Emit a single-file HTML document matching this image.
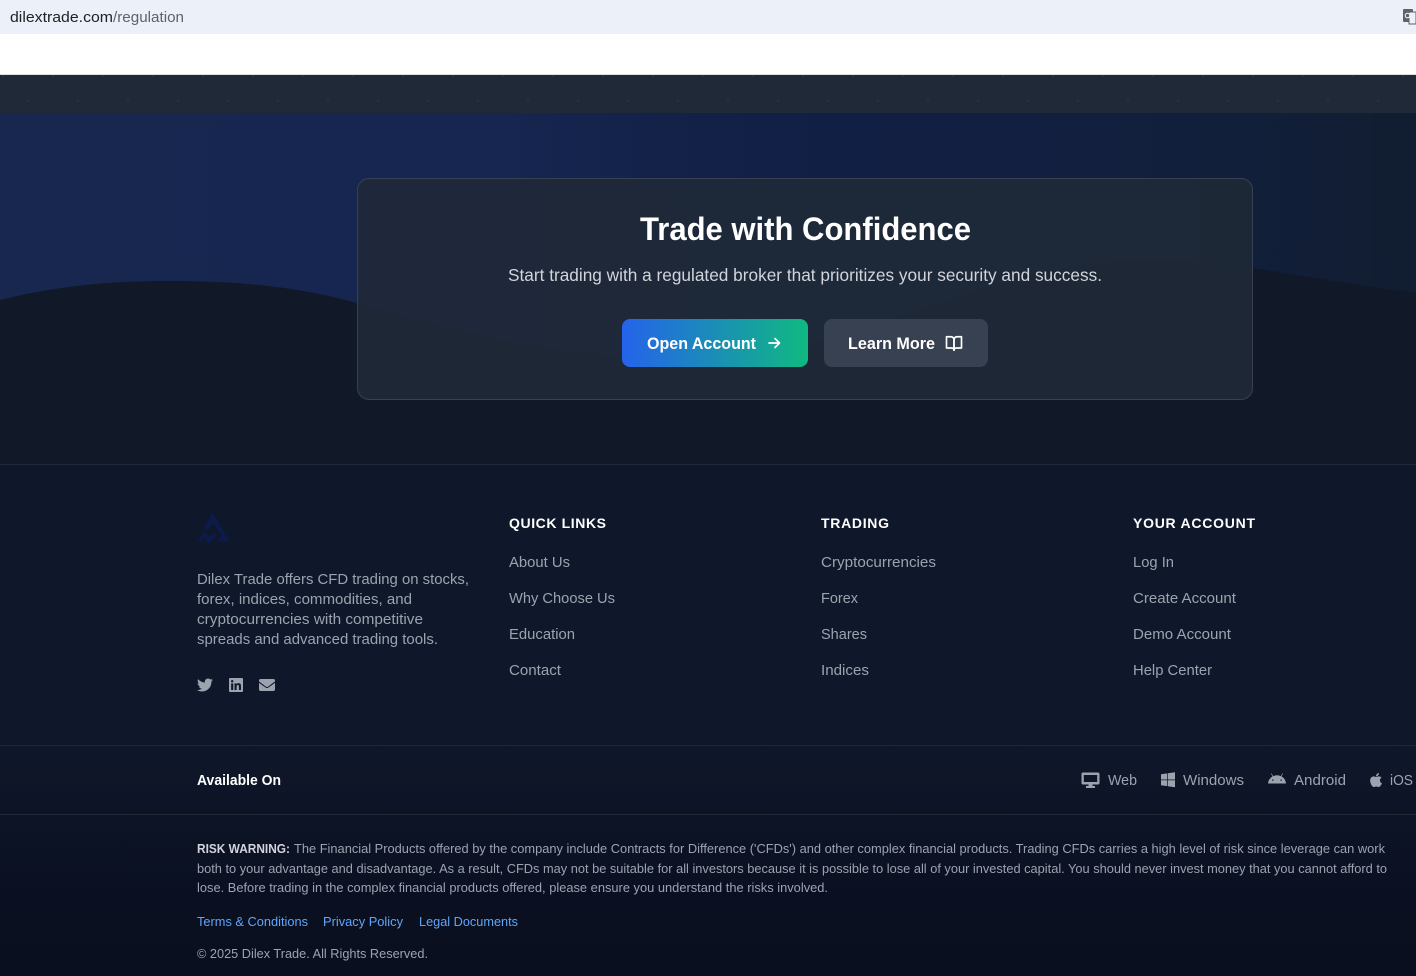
<!DOCTYPE html>
<html lang="en"><head><meta charset="utf-8"><title>Dilex Trade</title>
<style>
html,body{margin:0;padding:0;width:1416px;height:976px;overflow:hidden;background:#0f172a}
.a{position:absolute}
svg{position:absolute;left:0;top:0}
text{font-family:"Liberation Sans",sans-serif;white-space:pre}
.l{font-size:14.5px;fill:#9ca3af}
.h{font-size:14px;font-weight:bold;fill:#fff}
.p{font-size:14.5px;fill:#9ca3af}
.r{font-size:12.5px;fill:#9ca3af}
.b{font-size:12.5px;fill:#60a5fa}
</style></head><body>
<div class="a" style="left:0;top:0;width:1416px;height:34px;background:#ebf0f9"></div>
<div class="a" style="left:0;top:34px;width:1416px;height:40px;background:#fff"></div>
<div class="a" style="left:0;top:74px;width:1416px;height:1px;background:#dedede"></div>
<div class="a" style="left:0;top:75px;width:1416px;height:38px;background:#1f2937"></div>
<div class="a" style="left:0;top:113px;width:1416px;height:351px;background:linear-gradient(90deg,#172750 0%,#162650 35%,#121f46 55%,#121f3f 75%,#111f3a 88%,#111d30 100%)"></div>
<div class="a" style="left:0;top:465px;width:1416px;height:511px;background:linear-gradient(180deg,#0f172a 0%,#0f172a 55%,#0a1021 85%,#0a0f1f 100%)"></div>
<div class="a" style="left:0;top:464px;width:1416px;height:1px;background:#1f2937"></div>
<div class="a" style="left:0;top:745px;width:1416px;height:1px;background:#1f2937"></div>
<div class="a" style="left:0;top:814px;width:1416px;height:1px;background:#1f2937"></div>
<svg width="1416" height="976" viewBox="0 0 1416 976">
<defs><pattern id="d" x="0" y="0" width="50" height="50" patternUnits="userSpaceOnUse" patternTransform="translate(0 75)">
<rect x="2.6" y="0.2" width="1.2" height="1.2" fill="#374151"/><rect x="27.4" y="25.2" width="1.2" height="1.2" fill="#374151"/></pattern></defs>
<rect x="0" y="75" width="1416" height="38" fill="url(#d)"/>
<path d="M0 300C60 285 115 281 170 281C235 281 295 286 357 303C470 335 590 362 700 360C850 357 990 262 1130 261C1180 260 1215 262 1253 268C1320 279 1370 287 1416 293V464H0Z" fill="#111827"/>
</svg>
<div class="a" style="left:357px;top:178px;width:894px;height:220px;border:1px solid #374151;border-radius:12px;background:rgba(31,41,55,.9)"></div>
<div class="a" style="left:622px;top:319px;width:186px;height:48px;border-radius:8px;background:linear-gradient(90deg,#2563eb,#10b981)"></div>
<div class="a" style="left:824px;top:319px;width:164px;height:48px;border-radius:8px;background:#374151"></div>
<svg width="1416" height="976" viewBox="0 0 1416 976">
<text x="10" y="22" font-size="15" fill="#202124" textLength="103" lengthAdjust="spacingAndGlyphs">dilextrade.com</text>
<text x="113" y="22" font-size="15" fill="#5f6368" textLength="71" lengthAdjust="spacingAndGlyphs">/regulation</text>
<g><rect x="1403" y="9" width="10" height="13" rx="1" fill="#5f6368"/><rect x="1409" y="12" width="7" height="12" fill="#ebf0f9" stroke="#5f6368" stroke-width="1"/><circle cx="1407.5" cy="15.5" r="2.3" fill="none" stroke="#fff" stroke-width="1"/></g>

<text x="640" y="240" font-size="32" font-weight="bold" fill="#fff" textLength="331" lengthAdjust="spacingAndGlyphs">Trade with Confidence</text>
<text x="508" y="281" font-size="17.5" fill="#d1d5db" textLength="594" lengthAdjust="spacingAndGlyphs">Start trading with a regulated broker that prioritizes your security and success.</text>
<text x="647" y="349" font-size="16.5" font-weight="bold" fill="#fff" textLength="109" lengthAdjust="spacingAndGlyphs">Open Account</text>
<path d="M769 343H779M775 338.500l4.500 4.500-4.500 4.500" fill="none" stroke="#fff" stroke-width="1.7" stroke-linecap="round" stroke-linejoin="round"/>
<text x="848" y="349" font-size="16.5" font-weight="bold" fill="#fff" textLength="87" lengthAdjust="spacingAndGlyphs">Learn More</text>
<g transform="translate(945 334.500) scale(.75)" fill="none" stroke="#fff" stroke-width="2.2" stroke-linecap="round" stroke-linejoin="round"><path d="M2 3h6a4 4 0 0 1 4 4v14a3 3 0 0 0-3-3H2z"/><path d="M22 3h-6a4 4 0 0 0-4 4v14a3 3 0 0 1 3-3h7z"/></g>

<g fill="#0d1a4c"><path d="M213 513L229 541H217.500L222 535L213 523L207 530L204 527Z"/><path d="M197.500 541L205 532L210 537L214 532L217 535L209 544L204.500 538L201 541Z"/></g>

<text x="197" y="584" class="p" textLength="272" lengthAdjust="spacingAndGlyphs">Dilex Trade offers CFD trading on stocks,</text>
<text x="197" y="604" class="p" textLength="215" lengthAdjust="spacingAndGlyphs">forex, indices, commodities, and</text>
<text x="197" y="624" class="p" textLength="226" lengthAdjust="spacingAndGlyphs">cryptocurrencies with competitive</text>
<text x="197" y="644" class="p" textLength="241" lengthAdjust="spacingAndGlyphs">spreads and advanced trading tools.</text>

<g fill="#9ca3af">
<path transform="translate(197 677) scale(.03125)" d="M459.37 151.716c.325 4.548.325 9.097.325 13.645 0 138.72-105.583 298.558-298.558 298.558-59.452 0-114.68-17.219-161.137-47.106 8.447.974 16.568 1.299 25.34 1.299 49.055 0 94.213-16.568 130.274-44.832-46.132-.975-84.792-31.188-98.112-72.772 6.498.974 12.995 1.624 19.818 1.624 9.421 0 18.843-1.3 27.614-3.573-48.081-9.747-84.143-51.98-84.143-102.985v-1.299c13.969 7.797 30.214 12.67 47.431 13.319-28.264-18.843-46.781-51.005-46.781-87.391 0-19.492 5.197-37.36 14.294-52.954 51.655 63.675 129.3 105.258 216.365 109.807-1.624-7.797-2.599-15.918-2.599-24.04 0-57.828 46.782-104.934 104.934-104.934 30.213 0 57.502 12.67 76.67 33.137 23.715-4.548 46.456-13.32 66.599-25.34-7.798 24.366-24.366 44.833-46.132 57.827 21.117-2.273 41.584-8.122 60.426-16.243-14.292 20.791-32.161 39.308-52.628 54.253z"/>
<path transform="translate(229 677) scale(.03125)" d="M416 32H31.900C14.300 32 0 46.500 0 64.300v383.400C0 465.500 14.300 480 31.900 480H416c17.600 0 32-14.500 32-32.300V64.300c0-17.800-14.400-32.300-32-32.300zM135.400 416H69V202.200h66.500V416zm-33.200-243c-21.300 0-38.500-17.300-38.500-38.500S80.900 96 102.200 96c21.200 0 38.500 17.300 38.500 38.500 0 21.300-17.200 38.500-38.500 38.500zm282.100 243h-66.400V312c0-24.800-.5-56.700-34.500-56.700-34.600 0-39.900 27-39.900 54.900V416h-66.400V202.200h63.700v29.200h.9c8.900-16.800 30.600-34.500 62.900-34.500 67.200 0 79.700 44.300 79.700 101.900V416z"/>
<path transform="translate(259 677) scale(.03125)" d="M502.300 190.800c3.900-3.100 9.700-.2 9.700 4.700V400c0 26.500-21.500 48-48 48H48c-26.500 0-48-21.500-48-48V195.600c0-5 5.700-7.800 9.700-4.700 22.400 17.400 52.100 39.500 154.100 113.600 21.100 15.400 56.700 47.800 92.200 47.600 35.700.3 72-32.800 92.300-47.600 102-74.100 131.600-96.300 154-113.700zM256 320c23.200.4 56.600-29.200 73.400-41.400 132.700-96.300 142.800-104.700 173.400-128.700 5.800-4.500 9.200-11.500 9.200-18.900v-19c0-26.500-21.500-48-48-48H48C21.500 64 0 85.500 0 112v19c0 7.400 3.400 14.300 9.200 18.900 30.600 23.900 40.700 32.400 173.400 128.700 16.800 12.200 50.200 41.800 73.400 41.400z"/>
</g>

<text x="509" y="528" class="h" textLength="97">QUICK LINKS</text>
<text x="821" y="528" class="h" textLength="68">TRADING</text>
<text x="1133" y="528" class="h" textLength="122">YOUR ACCOUNT</text>

<text x="509" y="567" class="l" textLength="61" lengthAdjust="spacingAndGlyphs">About Us</text>
<text x="509" y="603" class="l" textLength="106" lengthAdjust="spacingAndGlyphs">Why Choose Us</text>
<text x="509" y="639" class="l" textLength="66" lengthAdjust="spacingAndGlyphs">Education</text>
<text x="509" y="675" class="l" textLength="52" lengthAdjust="spacingAndGlyphs">Contact</text>
<text x="821" y="567" class="l" textLength="115" lengthAdjust="spacingAndGlyphs">Cryptocurrencies</text>
<text x="821" y="603" class="l" textLength="37" lengthAdjust="spacingAndGlyphs">Forex</text>
<text x="821" y="639" class="l" textLength="46" lengthAdjust="spacingAndGlyphs">Shares</text>
<text x="821" y="675" class="l" textLength="48" lengthAdjust="spacingAndGlyphs">Indices</text>
<text x="1133" y="567" class="l" textLength="41" lengthAdjust="spacingAndGlyphs">Log In</text>
<text x="1133" y="603" class="l" textLength="103" lengthAdjust="spacingAndGlyphs">Create Account</text>
<text x="1133" y="639" class="l" textLength="98" lengthAdjust="spacingAndGlyphs">Demo Account</text>
<text x="1133" y="675" class="l" textLength="79" lengthAdjust="spacingAndGlyphs">Help Center</text>

<text x="197" y="785" font-size="14.5" font-weight="bold" fill="#fff" textLength="84" lengthAdjust="spacingAndGlyphs">Available On</text>
<g fill="#9ca3af">
<path d="M1083 772.500H1098A1.500 1.500 0 0 1 1099.500 774V783A1.500 1.500 0 0 1 1098 784.500H1083A1.500 1.500 0 0 1 1081.500 783V774A1.500 1.500 0 0 1 1083 772.500ZM1083.800 775V782H1097.200V775ZM1088.500 784.500H1092.500V786H1095V788H1086V786H1088.500Z" fill-rule="evenodd"/>
<path d="M1161 774.300L1167.300 773.400V779.500H1161ZM1168 773.300L1175 772.300V779.500H1168ZM1161 780.200H1167.300V786.100L1161 785.200ZM1168 780.200H1175V787.200L1168 786.200Z"/>
<path transform="translate(1268 771.500) scale(.03125)" d="M420.550 301.930a24 24 0 1 1 24-24 24 24 0 0 1-24 24m-265.100 0a24 24 0 1 1 24-24 24 24 0 0 1-24 24m273.700-144.480l47.940-83a10 10 0 1 0-17.270-10l-48.540 84.070a301.250 301.250 0 0 0-246.560 0L116.180 64.450a10 10 0 1 0-17.270 10l47.940 83C64.530 202.220 8.240 285.550 0 384H576c-8.240-98.450-64.540-181.780-146.850-226.550"/>
<path transform="translate(1370 772) scale(.03125)" d="M318.700 268.700c-.2-36.700 16.400-64.400 50-84.800-18.800-26.900-47.200-41.700-84.700-44.600-35.500-2.800-74.300 20.700-88.500 20.700-15 0-49.400-19.700-76.400-19.700C63.300 141.200 4 184.800 4 273.500q0 39.300 14.400 81.200c12.800 36.700 59 126.700 107.200 125.200 25.200-.6 43-17.900 75.800-17.900 31.800 0 48.300 17.900 76.400 17.900 48.600-.7 90.400-82.500 102.600-119.300-65.200-30.700-61.700-90-61.700-91.900zm-56.600-164.200c27.300-32.400 24.800-61.900 24-72.500-24.100 1.400-52 16.400-67.900 34.900-17.500 19.800-27.800 44.300-25.600 71.900 26.100 2 49.900-11.400 69.500-34.300z"/>
</g>
<text x="1108" y="785" class="l" textLength="29" lengthAdjust="spacingAndGlyphs">Web</text>
<text x="1183" y="785" class="l" textLength="61" lengthAdjust="spacingAndGlyphs">Windows</text>
<text x="1294" y="785" class="l" textLength="52" lengthAdjust="spacingAndGlyphs">Android</text>
<text x="1390" y="785" class="l" textLength="23" lengthAdjust="spacingAndGlyphs">iOS</text>

<text x="197" y="853" font-size="12.5" font-weight="bold" fill="#d1d5db" textLength="93" lengthAdjust="spacingAndGlyphs">RISK WARNING:</text>
<text x="294" y="853" class="r" textLength="1091" lengthAdjust="spacingAndGlyphs">The Financial Products offered by the company include Contracts for Difference ('CFDs') and other complex financial products. Trading CFDs carries a high level of risk since leverage can work</text>
<text x="197" y="873" class="r" textLength="1190" lengthAdjust="spacingAndGlyphs">both to your advantage and disadvantage. As a result, CFDs may not be suitable for all investors because it is possible to lose all of your invested capital. You should never invest money that you cannot afford to</text>
<text x="197" y="892" class="r" textLength="631" lengthAdjust="spacingAndGlyphs">lose. Before trading in the complex financial products offered, please ensure you understand the risks involved.</text>
<text x="197" y="926" class="b" textLength="111" lengthAdjust="spacingAndGlyphs">Terms &amp; Conditions</text>
<text x="323" y="926" class="b" textLength="80" lengthAdjust="spacingAndGlyphs">Privacy Policy</text>
<text x="419" y="926" class="b" textLength="99" lengthAdjust="spacingAndGlyphs">Legal Documents</text>
<text x="197" y="958" class="r" textLength="231" lengthAdjust="spacingAndGlyphs">© 2025 Dilex Trade. All Rights Reserved.</text>
</svg>
</body></html>
